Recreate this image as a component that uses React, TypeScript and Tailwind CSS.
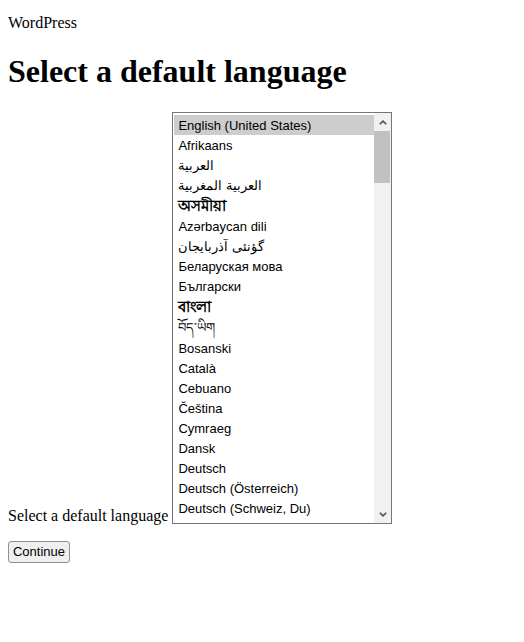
import React from "react";

const langs: { t: string; h: string; dir?: "rtl"; big?: boolean }[] = [
  { t: "English (United States)", h: "h-5" },
  { t: "Afrikaans", h: "h-5" },
  { t: "العربية", h: "h-5", dir: "rtl" },
  { t: "العربية المغربية", h: "h-5", dir: "rtl" },
  { t: "অসমীয়া", h: "h-[21px]", big: true },
  { t: "Azərbaycan dili", h: "h-5" },
  { t: "گؤنئی آذربایجان", h: "h-5", dir: "rtl" },
  { t: "Беларуская мова", h: "h-5" },
  { t: "Български", h: "h-5" },
  { t: "বাংলা", h: "h-[21px]", big: true },
  { t: "བོད་ཡིག", h: "h-[21px]" },
  { t: "Bosanski", h: "h-5" },
  { t: "Català", h: "h-5" },
  { t: "Cebuano", h: "h-5" },
  { t: "Čeština", h: "h-5" },
  { t: "Cymraeg", h: "h-5" },
  { t: "Dansk", h: "h-5" },
  { t: "Deutsch", h: "h-5" },
  { t: "Deutsch (Österreich)", h: "h-5" },
  { t: "Deutsch (Schweiz, Du)", h: "h-5" },
];

export default function App() {
  return (
    <div className="bg-white text-black px-2 pt-[14px] w-[524px] h-[642px] overflow-hidden font-['Liberation_Serif',serif]">
      <div className="text-[16px] leading-[18px]">WordPress</div>
      <h1 className="mt-[21px] text-[32px] leading-[37px] font-bold">Select a default language</h1>
      <div className="mt-[22px] flex items-end">
        <span className="text-[16px] leading-[18px] mr-[4px] relative top-[1px]">Select a default language</span>
        <div className="w-[220px] h-[412px] border border-[#767676] bg-white flex overflow-hidden font-['Liberation_Sans',sans-serif] text-[13px]">
          <div className="flex-1 flex flex-col pt-[2px] pl-[1px] overflow-hidden min-w-0">
            {langs.map((l, i) => (
              <div
                key={i}
                className={`${l.h} shrink-0 flex items-center pt-[1px] px-[4px] whitespace-nowrap ${i === 0 ? "bg-[#cdcdcd]" : ""}`}
              >
                <span dir={l.dir} className={l.big ? "text-[15px] font-semibold leading-[18px]" : ""}>
                  {l.t}
                </span>
              </div>
            ))}
          </div>
          <div className="w-[17px] shrink-0 bg-[#f1f1f1] flex flex-col">
            <div className="h-[18px] flex items-center justify-center">
              <svg width="8" height="5" viewBox="0 0 8 5">
                <path d="M0.8 4.3 L4 1.1 L7.2 4.3" fill="none" stroke="#505050" strokeWidth="1.6" />
              </svg>
            </div>
            <div className="mr-[1px] h-[52px] bg-[#c1c1c1]" />
            <div className="flex-1" />
            <div className="h-[17px] flex items-center justify-center">
              <svg width="8" height="5" viewBox="0 0 8 5">
                <path d="M0.8 0.7 L4 3.9 L7.2 0.7" fill="none" stroke="#505050" strokeWidth="1.6" />
              </svg>
            </div>
          </div>
        </div>
      </div>
      <div className="mt-[15px]">
        <button className="h-[22px] w-[62px] border border-[#8f8f9d] rounded-[3px] bg-[#efeff0] text-[13px] leading-[15px] font-['Liberation_Sans',sans-serif] text-black">
          Continue
        </button>
      </div>
    </div>
  );
}
